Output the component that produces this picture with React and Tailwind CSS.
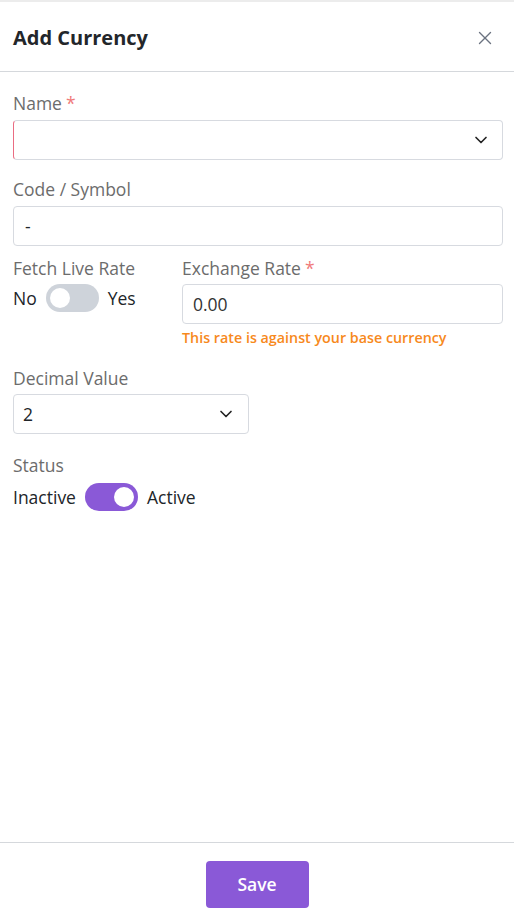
import React, { useState } from "react";
import { X, ChevronDown } from "lucide-react";

const Label = ({ children, required }) => (
  <div className="text-[17.5px] leading-[22px] text-[#6c6c6c]">
    {children}
    {required && <span className="ml-1 text-[#f07a7a]">*</span>}
  </div>
);

const Toggle = ({ on, onChange }) => (
  <button
    type="button"
    onClick={() => onChange(!on)}
    className={`relative h-[28px] w-[53px] shrink-0 rounded-full transition-colors ${
      on ? "bg-[#8a59d7]" : "bg-[#ced3da]"
    }`}
  >
    <span
      className={`absolute top-[4px] h-[20px] w-[20px] rounded-full bg-white transition-all ${
        on ? "left-[29px]" : "left-[4px]"
      }`}
    />
  </button>
);

export default function App() {
  const [live, setLive] = useState(false);
  const [active, setActive] = useState(true);

  return (
    <div
      className="flex h-[916px] w-[514px] flex-col bg-white text-[#212529]"
      style={{ fontFamily: '"Open Sans", "Noto Sans", sans-serif' }}
    >
      <div className="h-[2px] bg-[#ececec]" />

      {/* Header */}
      <div className="flex h-[70px] items-center justify-between border-b border-[#d5d8dc] pl-[13px] pr-[18px] pt-[2px]">
        <h2 className="text-[20px] font-bold text-[#23262a]">Add Currency</h2>
        <X size={22} strokeWidth={1.5} className="text-[#6b7280]" />
      </div>

      {/* Body */}
      <div className="flex flex-1 flex-col pl-[13px] pr-[11px] pt-[20px]">
        <Label required>Name</Label>
        <div className="mt-[6px] flex h-[40px] items-center justify-end rounded-[4px] border border-[#d7dae0] border-l-[#ea6c82] pr-[11px]">
          <ChevronDown size={20} strokeWidth={2} className="text-[#222]" />
        </div>

        <div className="mt-[18px]">
          <Label>Code / Symbol</Label>
        </div>
        <div className="mt-[6px] flex h-[40px] items-center rounded-[4px] border border-[#d7dae0] px-[11px] text-[17.5px]">
          -
        </div>

        <div className="mt-[11px] flex">
          <div className="flex w-[169px] shrink-0 flex-col">
            <Label>Fetch Live Rate</Label>
            <div className="mt-[5px] flex items-center gap-[9px] text-[17.5px]">
              <span>No</span>
              <Toggle on={live} onChange={setLive} />
              <span>Yes</span>
            </div>
          </div>
          <div className="flex flex-1 flex-col">
            <Label required>Exchange Rate</Label>
            <div className="mt-[5px] flex h-[40px] items-center rounded-[4px] border border-[#d7dae0] px-[10px] text-[17.5px] text-[#333]">
              0.00
            </div>
            <div className="mt-[4px] text-[14.3px] font-semibold leading-[20px] text-[#f7891c]">
              This rate is against your base currency
            </div>
          </div>
        </div>

        <div className="mt-[19px]">
          <Label>Decimal Value</Label>
        </div>
        <div className="mt-[5px] flex h-[40px] w-[236px] items-center justify-between rounded-[4px] border border-[#d7dae0] pl-[9px] pr-[12px] text-[17.5px]">
          <span>2</span>
          <ChevronDown size={20} strokeWidth={2} className="text-[#222]" />
        </div>

        <div className="mt-[20px]">
          <Label>Status</Label>
        </div>
        <div className="mt-[7px] flex items-center gap-[9px] text-[17.5px]">
          <span>Inactive</span>
          <Toggle on={active} onChange={setActive} />
          <span>Active</span>
        </div>
      </div>

      {/* Footer */}
      <div className="flex h-[74px] items-start justify-center border-t border-[#d5d8dc] pt-[18px]">
        <button className="h-[47px] w-[103px] rounded-[4px] bg-[#8a59d7] text-[17.5px] font-semibold text-white">
          Save
        </button>
      </div>
    </div>
  );
}
